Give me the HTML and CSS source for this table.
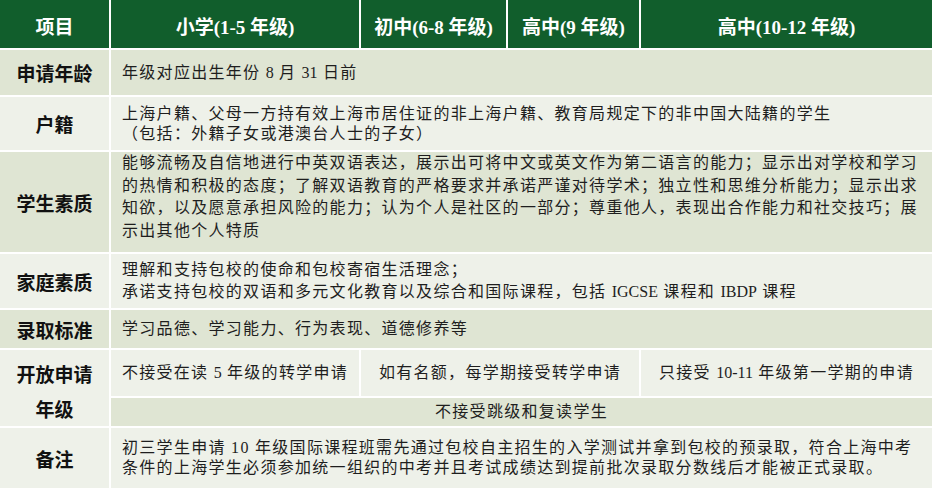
FILE: index.html
```html
<!DOCTYPE html>
<html lang="zh">
<head>
<meta charset="utf-8">
<title>招生信息</title>
<link rel="stylesheet" href="styles.css">
</head>
<body>
<div class="table">
  <div class="hd">项目</div>
  <div class="hd">小学(1-5 年级)</div>
  <div class="hd">初中(6-8 年级)</div>
  <div class="hd">高中(9 年级)</div>
  <div class="hd">高中(10-12 年级)</div>

  <div class="lb dark">申请年龄</div>
  <div class="ct dark span-all"><span>年级对应出生年份 <span class="lat">8</span> 月 <span class="lat">31</span> 日前</span></div>

  <div class="lb light">户籍</div>
  <div class="ct light span-all lh20"><span>上海户籍、父母一方持有效上海市居住证的非上海户籍、教育局规定下的非中国大陆籍的学生<br>（包括：外籍子女或港澳台人士的子女）</span></div>

  <div class="lb dark">学生素质</div>
  <div class="ct dark span-all top"><span>能够流畅及自信地进行中英双语表达，展示出可将中文或英文作为第二语言的能力；显示出对学校和学习的热情和积极的态度；了解双语教育的严格要求并承诺严谨对待学术；独立性和思维分析能力；显示出求知欲，以及愿意承担风险的能力；认为个人是社区的一部分；尊重他人，表现出合作能力和社交技巧；展示出其他个人特质</span></div>

  <div class="lb light">家庭素质</div>
  <div class="ct light span-all"><span>理解和支持包校的使命和包校寄宿生活理念；<br>承诺支持包校的双语和多元文化教育以及综合和国际课程，包括 <span class="lat">IGCSE</span> 课程和 <span class="lat">IBDP</span> 课程</span></div>

  <div class="lb dark">录取标准</div>
  <div class="ct dark span-all"><span>学习品德、学习能力、行为表现、道德修养等</span></div>

  <div class="lb light two-row">开放申请<br>年级</div>
  <div class="ct light center"><span>不接受在读 <span class="lat">5</span> 年级的转学申请</span></div>
  <div class="ct light center span-mid"><span>如有名额，每学期接受转学申请</span></div>
  <div class="ct light center"><span>只接受 <span class="lat">10-11</span> 年级第一学期的申请</span></div>
  <div class="ct dark center span-all"><span>不接受跳级和复读学生</span></div>

  <div class="lb light">备注</div>
  <div class="ct light span-all lh20"><p class="para">初三学生申请 10 年级国际课程班需先通过包校自主招生的入学测试并拿到包校的预录取，符合上海中考条件的上海学生必须参加统一组织的中考并且考试成绩达到提前批次录取分数线后才能被正式录取。</p></div>
</div>
</body>
</html>
```

FILE: styles.css
```css
html, body {
  margin: 0;
  padding: 0;
  background: #ffffff;
}

.table {
  display: grid;
  grid-template-columns: 109px 248px 145px 131px 291px;
  grid-template-rows: 48px 45px 53px 100px 54px 38px 46px 28px 60px;
  gap: 2px;
  width: 932px;
  height: 488px;
  background: #ffffff;
  font-family: "Liberation Serif", "Noto Sans CJK SC", serif;
}

.hd {
  background: #115e2c;
  color: #ffffff;
  font-weight: bold;
  font-size: 19px;
  display: flex;
  align-items: center;
  justify-content: center;
  padding-top: 3px;
  box-sizing: border-box;
}

.dark {
  background: #dfe5d3;
}

.light {
  background: #eef1e9;
}

.lb {
  font-weight: bold;
  font-size: 19px;
  color: #111111;
  display: flex;
  align-items: center;
  justify-content: center;
  text-align: center;
}

.two-row {
  grid-row: span 2;
  line-height: 35px;
  padding-top: 10px;
  box-sizing: border-box;
}

.ct {
  font-size: 16px;
  letter-spacing: 1.3px;
  line-height: 22px;
  color: #1e1e1e;
  display: flex;
  flex-direction: column;
  justify-content: center;
  padding: 0 8px 0 11px;
}

.ct .lat {
  letter-spacing: 0;
}

.para {
  margin: 0;
}

.ct.lh20 {
  line-height: 20px;
}

.ct.top {
  justify-content: flex-start;
  line-height: 22.7px;
  padding-top: 0;
}

.ct.center {
  align-items: center;
  text-align: center;
  padding: 0;
}

.span-all {
  grid-column: 2 / 6;
}

.span-mid {
  grid-column: 3 / 5;
}
```
